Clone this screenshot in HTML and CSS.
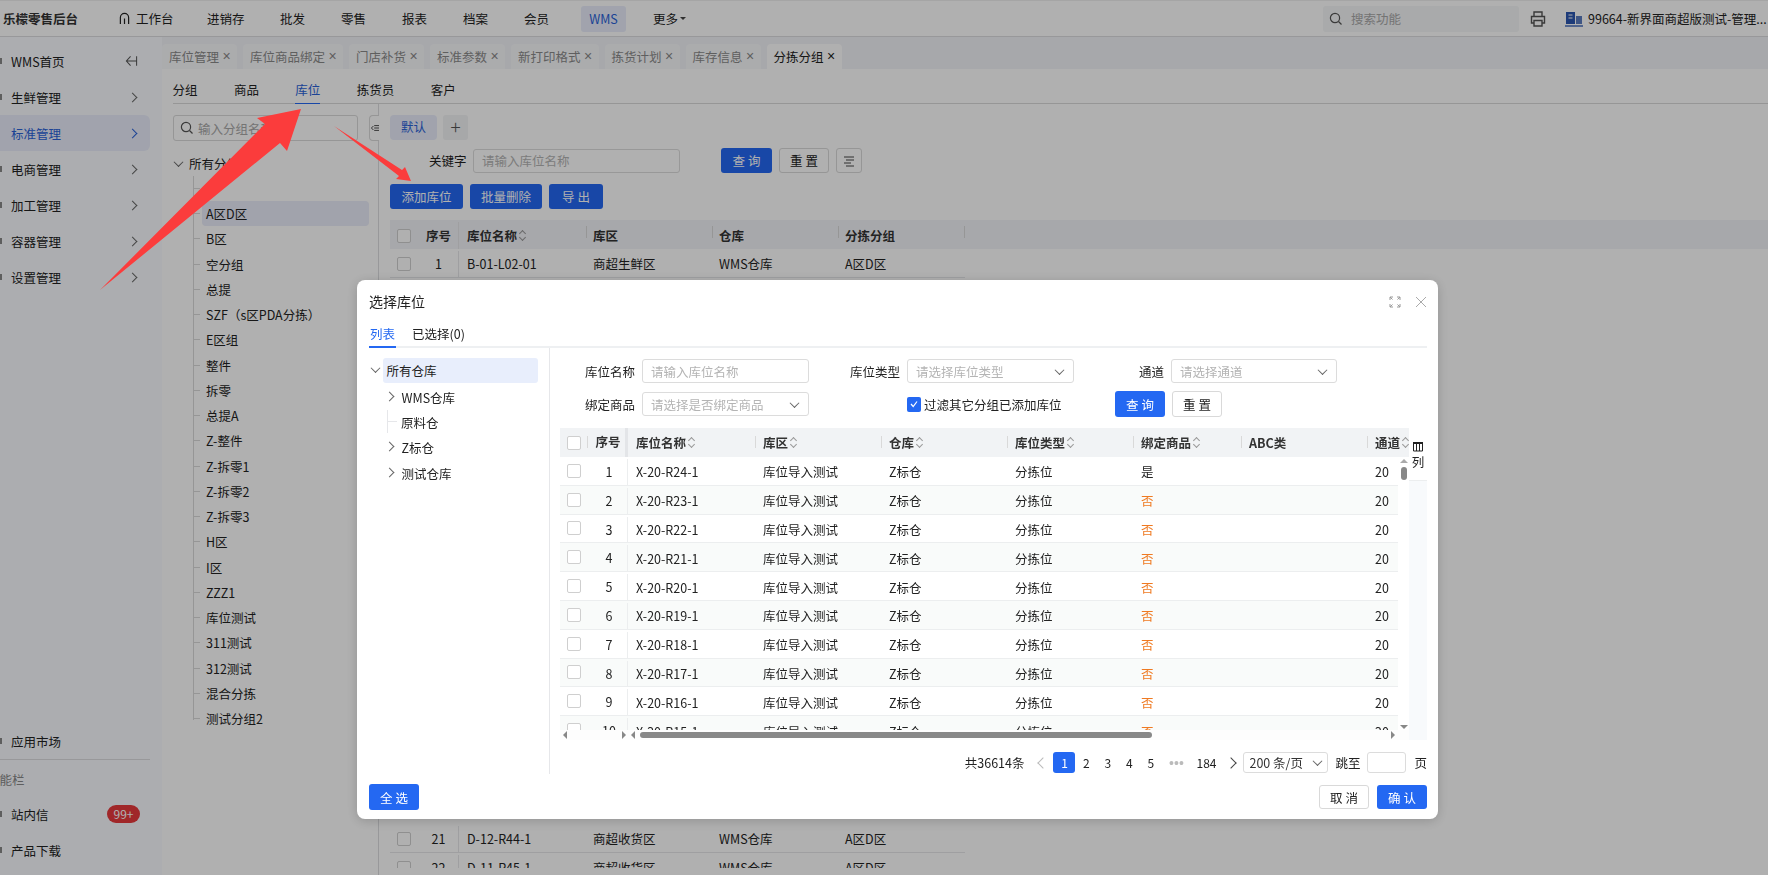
FILE: index.html
```html
<!DOCTYPE html>
<html lang="zh-CN">
<head>
<meta charset="utf-8">
<title>选择库位</title>
<link rel="stylesheet" href="styles.css">
</head>
<body>
<div class="page">
  <header class="topbar">
    <div class="brand">乐檬零售后台</div>
    <nav class="topnav">
      <a class="tn tn-home"><svg class="home" viewBox="0 0 12 14"><path d="M1.500 13V6a4.500 4.500 0 0 1 9 0v7M6 7v6" fill="none" stroke="#222" stroke-width="1.300"/></svg>工作台</a>
      <a class="tn tn-a">进销存</a>
      <a class="tn tn-b">批发</a>
      <a class="tn tn-b">零售</a>
      <a class="tn tn-b">报表</a>
      <a class="tn tn-b">档案</a>
      <a class="tn tn-b">会员</a>
      <a class="tn tn-wms">WMS</a>
      <a class="tn tn-more">更多<i class="caret"></i></a>
    </nav>
    <div class="topright">
      <div class="topsearch">
        <svg class="ic14" viewBox="0 0 14 14"><circle cx="6" cy="6" r="4.600" fill="none" stroke="#555" stroke-width="1.200"/><path d="M9.500 9.500l3 3" stroke="#555" stroke-width="1.200"/></svg>
        <span>搜索功能</span>
      </div>
      <svg class="printer" viewBox="0 0 18 18"><path d="M5 6V2h8v4M5 13H2.500V6.500h13V13H13M5 10.500h8V16H5z" fill="none" stroke="#555" stroke-width="1.400"/></svg>
      <svg class="store" viewBox="0 0 18 16"><path d="M1 1h9v12H1z" fill="#2a56b0"/><path d="M11 5h6v8h-6z" fill="#5b7cc0"/><path d="M0 15h18" stroke="#2a56b0" stroke-width="1.300"/><path d="M3.500 4h4M3.500 7h4" stroke="#fff"/></svg>
      <span class="account">99664-新界面商超版测试-管理...</span>
    </div>
  </header>

  <div class="body">
    <aside class="sidebar">
      <div class="side-top">
        <div class="si"><span>WMS首页</span><svg class="collapse" viewBox="0 0 14 12"><path d="M6 1L1.500 6 6 11M1.500 6H12.500M12.500 1v10" fill="none" stroke="#555" stroke-width="1.100"/></svg></div>
        <div class="si"><span>生鲜管理</span><i class="chev"></i></div>
        <div class="si si-on"><span>标准管理</span><i class="chev"></i></div>
        <div class="si"><span>电商管理</span><i class="chev"></i></div>
        <div class="si"><span>加工管理</span><i class="chev"></i></div>
        <div class="si"><span>容器管理</span><i class="chev"></i></div>
        <div class="si"><span>设置管理</span><i class="chev"></i></div>
      </div>
      <div class="side-bottom">
        <div class="si"><span>应用市场</span></div>
        <div class="side-head">功能栏</div>
        <div class="si"><span>站内信</span><b class="badge">99+</b></div>
        <div class="si"><span>产品下载</span></div>
      </div>
    </aside>

    <main class="content">
      <div class="tabstrip">
        <div class="tab">库位管理<i>×</i></div>
        <div class="tab">库位商品绑定<i>×</i></div>
        <div class="tab">门店补货<i>×</i></div>
        <div class="tab">标准参数<i>×</i></div>
        <div class="tab">新打印格式<i>×</i></div>
        <div class="tab">拣货计划<i>×</i></div>
        <div class="tab">库存信息<i>×</i></div>
        <div class="tab tab-on">分拣分组<i>×</i></div>
      </div>
      <div class="panel">
        <div class="subtabs">
          <a>分组</a><a>商品</a><a class="on">库位</a><a>拣货员</a><a>客户</a>
        </div>
        <div class="split">
          <section class="groups">
            <div class="gsearch">
              <svg class="ic14" viewBox="0 0 14 14"><circle cx="6" cy="6" r="4.600" fill="none" stroke="#555" stroke-width="1.200"/><path d="M9.500 9.500l3 3" stroke="#555" stroke-width="1.200"/></svg>
              <span>输入分组名称</span>
            </div>
            <div class="groot"><i class="chev-d"></i>所有分组</div>
            <ul class="gtree">
              <li class="blank"></li>
              <li class="on">A区D区</li><li>B区</li><li>空分组</li><li>总提</li><li>SZF（s区PDA分拣）</li><li>E区组</li><li>整件</li><li>拆零</li><li>总提A</li><li>Z-整件</li><li>Z-拆零1</li><li>Z-拆零2</li><li>Z-拆零3</li><li>H区</li><li>I区</li><li>ZZZ1</li><li>库位测试</li><li>311测试</li><li>312测试</li><li>混合分拣</li><li>测试分组2</li>
            </ul>
            <div class="toggle"><svg viewBox="0 0 10 10"><path d="M4 2h6M4 5h6M4 8h6M3 2.500L0.500 5 3 7.500" fill="none" stroke="#222" stroke-width="1"/></svg></div>
          </section>
          <section class="list">
            <div class="vtabs"><span class="vtab">默认</span><span class="vadd">+</span></div>
            <div class="filter">
              <label>关键字</label>
              <div class="inp kw">请输入库位名称</div>
              <button class="btn pri q">查 询</button>
              <button class="btn def r">重 置</button>
              <button class="btn def cfg"><svg viewBox="0 0 12 12"><path d="M1 2h10M3 5h8M1 8h7M3 11h8" stroke="#444" stroke-width="1"/></svg></button>
            </div>
            <div class="actions">
              <button class="btn pri a1">添加库位</button>
              <button class="btn pri a2">批量删除</button>
              <button class="btn pri a3">导 出</button>
            </div>
            <div class="bt">
              <div class="bt-h">
                <span class="bc"><i class="cb"></i></span><span class="bn">序号</span>
                <span class="bd">库位名称<i class="sort"></i></span><span class="bd">库区</span><span class="bd">仓库</span><span class="bd bd-l">分拣分组</span>
              </div>
              <div class="bt-r"><span class="bc"><i class="cb"></i></span><span class="bn">1</span><span>B-01-L02-01</span><span>商超生鲜区</span><span>WMS仓库</span><span>A区D区</span></div>
              <div class="bt-gap"></div>
              <div class="bt-r"><span class="bc"><i class="cb"></i></span><span class="bn">21</span><span>D-12-R44-1</span><span>商超收货区</span><span>WMS仓库</span><span>A区D区</span></div>
              <div class="bt-r"><span class="bc"><i class="cb"></i></span><span class="bn">22</span><span>D-11-R45-1</span><span>商超收货区</span><span>WMS仓库</span><span>A区D区</span></div>
            </div>
          </section>
        </div>
      </div>
    </main>
  </div>
</div>

<div class="mask"></div>

<svg class="arrows" viewBox="0 0 1768 875">
  <polygon points="100,290 265,124 257,118 301,109 287,151 280,143" fill="#fb3c3c"/>
  <polygon points="334,126 402,170 405,167 411,181 396,179 399,176" fill="#fb3c3c"/>
</svg>

<div class="modal">
  <div class="m-title">
    <h2>选择库位</h2>
    <svg class="m-expand" viewBox="0 0 12 12"><path d="M1 4V1h3M8 1h3v3M1 8v3h3M11 8v3H8M1 1l2.500 2.500M11 1L8.500 3.500M1 11l2.500-2.500M11 11L8.500 8.500" fill="none" stroke="#999" stroke-width="1"/></svg>
    <svg class="m-close" viewBox="0 0 12 12"><path d="M1 1l10 10M11 1L1 11" stroke="#aaa" stroke-width="1"/></svg>
  </div>
  <div class="m-tabs"><a class="on">列表</a><a>已选择(0)</a></div>
  <div class="m-main">
    <div class="m-tree">
      <div class="mt mt-root"><i class="chev-d"></i><span>所有仓库</span></div>
      <div class="mt"><i class="chev-r"></i><span>WMS仓库</span></div>
      <div class="mt mt-leaf"><span>原料仓</span></div>
      <div class="mt"><i class="chev-r"></i><span>Z标仓</span></div>
      <div class="mt"><i class="chev-r"></i><span>测试仓库</span></div>
    </div>
    <div class="m-right">
      <div class="m-form">
        <label>库位名称</label><div class="inp mi">请输入库位名称</div>
        <label>库位类型</label><div class="inp mi sel">请选择库位类型<i class="chev-d"></i></div>
        <label>通道</label><div class="inp mi sel">请选择通道<i class="chev-d"></i></div>
        <label>绑定商品</label><div class="inp mi sel">请选择是否绑定商品<i class="chev-d"></i></div>
        <div class="checkline"><i class="ck"><svg viewBox="0 0 10 10"><path d="M2 5l2.200 2.500L8 2.500" fill="none" stroke="#fff" stroke-width="1.200"/></svg></i>过滤其它分组已添加库位</div>
        <div class="f-btns"><button class="btn pri mq">查 询</button><button class="btn def mr">重 置</button></div>
      </div>
      <div class="mt-wrap">
        <div class="gridbox">
          <div class="g-h">
            <span class="c0"><i class="cb"></i></span><span class="c1 sep">序号</span>
            <span class="hd frz">库位名称<i class="sort"></i></span><span class="hd sep">库区<i class="sort"></i></span><span class="hd sep">仓库<i class="sort"></i></span><span class="hd sep">库位类型<i class="sort"></i></span><span class="hd sep">绑定商品<i class="sort"></i></span><span class="hd sep">ABC类</span><span class="hd sep">通道<i class="sort"></i></span>
          </div>
          <div class="g-body">
            <div class="g-r"><span class="c0"><i class="cb"></i></span><span class="c1">1</span><span class="frz">X-20-R24-1</span><span>库位导入测试</span><span>Z标仓</span><span>分拣位</span><span>是</span><span></span><span>20</span></div>
            <div class="g-r"><span class="c0"><i class="cb"></i></span><span class="c1">2</span><span class="frz">X-20-R23-1</span><span>库位导入测试</span><span>Z标仓</span><span>分拣位</span><span class="no">否</span><span></span><span>20</span></div>
            <div class="g-r"><span class="c0"><i class="cb"></i></span><span class="c1">3</span><span class="frz">X-20-R22-1</span><span>库位导入测试</span><span>Z标仓</span><span>分拣位</span><span class="no">否</span><span></span><span>20</span></div>
            <div class="g-r"><span class="c0"><i class="cb"></i></span><span class="c1">4</span><span class="frz">X-20-R21-1</span><span>库位导入测试</span><span>Z标仓</span><span>分拣位</span><span class="no">否</span><span></span><span>20</span></div>
            <div class="g-r"><span class="c0"><i class="cb"></i></span><span class="c1">5</span><span class="frz">X-20-R20-1</span><span>库位导入测试</span><span>Z标仓</span><span>分拣位</span><span class="no">否</span><span></span><span>20</span></div>
            <div class="g-r"><span class="c0"><i class="cb"></i></span><span class="c1">6</span><span class="frz">X-20-R19-1</span><span>库位导入测试</span><span>Z标仓</span><span>分拣位</span><span class="no">否</span><span></span><span>20</span></div>
            <div class="g-r"><span class="c0"><i class="cb"></i></span><span class="c1">7</span><span class="frz">X-20-R18-1</span><span>库位导入测试</span><span>Z标仓</span><span>分拣位</span><span class="no">否</span><span></span><span>20</span></div>
            <div class="g-r"><span class="c0"><i class="cb"></i></span><span class="c1">8</span><span class="frz">X-20-R17-1</span><span>库位导入测试</span><span>Z标仓</span><span>分拣位</span><span class="no">否</span><span></span><span>20</span></div>
            <div class="g-r"><span class="c0"><i class="cb"></i></span><span class="c1">9</span><span class="frz">X-20-R16-1</span><span>库位导入测试</span><span>Z标仓</span><span>分拣位</span><span class="no">否</span><span></span><span>20</span></div>
            <div class="g-r"><span class="c0"><i class="cb"></i></span><span class="c1">10</span><span class="frz">X-20-R15-1</span><span>库位导入测试</span><span>Z标仓</span><span>分拣位</span><span class="no">否</span><span></span><span>20</span></div>
            <div class="vscroll"><i class="up"></i><b></b><i class="down"></i></div>
          </div>
          <div class="hscroll">
            <div class="hs-frozen"><i class="al"></i><i class="ar"></i></div>
            <div class="hs-main"><i class="al"></i><b></b><i class="ar"></i></div>
          </div>
        </div>
        <div class="colbtn">
          <div class="colhead"><svg viewBox="0 0 10 10"><path d="M0.500 1h9v8h-9zM3.500 1v8M6.500 1v8" fill="none" stroke="#222" stroke-width="1"/><path d="M0 1h10" stroke="#222" stroke-width="2"/></svg><span>列</span></div>
        </div>
      </div>
      <div class="pager">
        <span class="total">共36614条</span>
        <span class="arrow dim"><i class="pl"></i></span>
        <span class="pg cur">1</span><span class="pg">2</span><span class="pg">3</span><span class="pg">4</span><span class="pg">5</span>
        <span class="dots">•••</span>
        <span class="pg last">184</span>
        <span class="arrow"><i class="pr"></i></span>
        <div class="inp psize">200 条/页<i class="chev-d"></i></div>
        <span class="jump">跳至</span>
        <div class="inp pjump"></div>
        <span class="jump jump-end">页</span>
      </div>
    </div>
  </div>
  <div class="m-foot">
    <button class="btn all">全 选</button>
    <div class="m-foot-r">
      <button class="btn def mbtn">取 消</button>
      <button class="btn pri mbtn">确 认</button>
    </div>
  </div>
</div>
</body>
</html>
```

FILE: styles.css
```css
* { box-sizing: border-box; }
html, body { margin: 0; padding: 0; height: 100%; overflow: hidden; }
body {
  font-family: "Noto Sans CJK SC", "Noto Sans", sans-serif;
  font-size: 12.5px;
  color: #222;
  background: #fff;
}
i { font-style: normal; }
button { font-family: inherit; cursor: pointer; padding: 0; }
ul { list-style: none; margin: 0; padding: 0; }

.page { height: 875px; display: flex; flex-direction: column; }

/* top bar */
.topbar { height: 37px; flex: none; display: flex; align-items: center; border-bottom: 1px solid #dcdde0; border-top: 1px solid #efefef; background: #fff; }
.brand { width: 119px; padding-left: 3px; font-weight: 700; color: #333; }
.topnav { display: flex; align-items: center; }
.tn { display: flex; align-items: center; height: 26px; }
.tn-home { width: 88px; }
.home { width: 11px; height: 13px; margin-right: 6px; }
.tn-a { width: 73px; }
.tn-b { width: 61px; }
.tn-wms { width: 45px; justify-content: center; background: #e9edfb; color: #2a62d8; border-radius: 3px; margin: 0 27px 0 -4px; }
.caret { display: inline-block; border: 3px solid transparent; border-top-color: #444; border-bottom: 0; margin-left: 2px; }
.topright { margin-left: auto; display: flex; align-items: center; }
.topsearch { width: 196px; height: 26px; display: flex; align-items: center; gap: 8px; padding-left: 6px; background: #f5f6f8; border-radius: 3px; color: #a8a8a8; }
.ic14 { width: 14px; height: 14px; flex: none; }
.printer { width: 18px; height: 18px; margin-left: 10px; }
.store { width: 18px; height: 16px; margin-left: 18px; }
.account { width: 180px; margin-left: 5px; white-space: nowrap; overflow: hidden; }

.body { flex: 1; display: flex; min-height: 0; }

/* sidebar */
.sidebar { width: 162px; flex: none; background: #f9fbff; display: flex; flex-direction: column; justify-content: space-between; padding: 6px 0 7px; overflow: hidden; }
.si { height: 36px; width: 150px; padding: 0 12px 0 11px; display: flex; align-items: center; justify-content: space-between; position: relative; }
.si::before { content: ""; position: absolute; left: 0; top: 15px; width: 1.5px; height: 6px; background: #888; }
.si-on::before { display: none; }
.si-on { background: #e9edfb; color: #2a62d8; border-radius: 0 6px 6px 0; }
.chev { width: 7px; height: 7px; border-top: 1.2px solid #666; border-right: 1.2px solid #666; transform: rotate(45deg); margin-right: 2px; }
.si-on .chev { border-color: #2a62d8; }
.collapse { width: 13px; height: 12px; }
.side-head { width: 150px; border-top: 1px solid #dcdde0; height: 37px; line-height: 40px; color: #888; text-indent: -13px; }
.badge { width: 33px; height: 18px; line-height: 18px; border-radius: 9px; background: #e8393c; color: #fff; font-weight: 400; font-size: 12px; text-align: center; margin-right: -2px; }

/* content */
.content { flex: 1; min-width: 0; display: flex; flex-direction: column; }
.tabstrip { height: 32px; flex: none; background: #f2f3f8; display: flex; align-items: flex-end; gap: 6px; }
.tab { height: 25px; padding: 0 6px 1px 7px; background: #f8f9fb; border-radius: 4px 4px 0 0; color: #8a8a8a; display: flex; align-items: center; gap: 3px; white-space: nowrap; }
.tab i { width: 9px; font-family: "Liberation Sans", sans-serif; font-size: 14px; line-height: 1; color: #888; text-align: center; }
.tab-on { background: #fff; color: #222; }
.tab-on i { color: #222; }
.panel { flex: 1; min-height: 0; display: flex; flex-direction: column; padding: 0 0 0 11px; }
.subtabs { height: 35px; flex: none; display: flex; border-bottom: 1px solid #d9d9d9; }
.subtabs a { height: 35px; line-height: 42px; margin-right: 36.4px; }
.subtabs a:first-child { margin-left: -0.5px; }
.subtabs a.on { color: #2a62d8; border-bottom: 1px solid #2468f2; }
.split { flex: 1; min-height: 0; display: flex; }

.groups { width: 206px; flex: none; position: relative; border-right: 1px solid #dcdde0; padding-top: 11px; }
.gsearch { width: 185px; height: 26px; border: 1px solid #d9d9d9; border-radius: 3px; display: flex; align-items: center; gap: 4px; padding-left: 6px; color: #a8a8a8; white-space: nowrap; overflow: hidden; }
.groot { margin-top: 10px; height: 25px; display: flex; align-items: center; gap: 7px; padding-left: 2px; }
.chev-d { display: inline-block; width: 7px; height: 7px; border-right: 1.1px solid #666; border-bottom: 1.1px solid #666; transform: rotate(45deg) translate(-1px, -1px); flex: none; }
.chev-r { display: inline-block; width: 7px; height: 7px; border-right: 1.1px solid #666; border-top: 1.1px solid #666; transform: rotate(45deg); flex: none; }
.gtree { margin-left: 20px; border-left: 1px solid #d9d9d9; height: 544px; }
.gtree li { height: 25.25px; line-height: 25px; padding-left: 4px; position: relative; margin-left: 8px; margin-right: 9px; border-radius: 4px; white-space: nowrap; }
.gtree li::before { content: ""; position: absolute; left: -8px; top: 12px; width: 6px; border-top: 1px solid #d9d9d9; }
.gtree li.blank { height: 25px; }
.gtree li.on { background: #e9ecf9; }
.toggle { position: absolute; right: -1px; top: 11px; width: 10px; height: 26px; border: 1px solid #d9d9d9; border-right: 0; border-radius: 4px 0 0 4px; background: #fff; display: flex; align-items: center; }
.toggle svg { width: 8px; height: 8px; margin-left: 1px; }

.list { flex: 1; min-width: 0; padding: 11px 0 0 11px; }
.vtabs { display: flex; gap: 6px; height: 25px; }
.vtab { width: 47px; line-height: 24px; text-align: center; background: #e9edfb; color: #2a62d8; border-radius: 4px; }
.vadd { width: 25px; line-height: 22px; text-align: center; background: #f2f3f5; border-radius: 3px; font-size: 19px; color: #555; font-weight: 300; }
.filter { height: 25px; margin-top: 8px; display: flex; align-items: center; }
.filter label { width: 39px; margin-left: 39px; }
.inp { height: 24px; border: 1px solid #dcdcdc; border-radius: 3px; color: #b4b4b4; background: #fff; display: flex; align-items: center; justify-content: space-between; padding: 0 8px; white-space: nowrap; }
.kw { width: 207px; margin-left: 5px; }
.btn { height: 25px; border-radius: 3px; font-size: 12.5px; border: 1px solid transparent; }
.pri { background: #2468f2; color: #fff; }
.def { background: #fff; border-color: #d9d9d9; color: #222; }
.q { width: 51px; margin-left: 41px; }
.r { width: 50px; margin-left: 7px; }
.cfg { width: 26px; margin-left: 7px; display: flex; align-items: center; justify-content: center; }
.cfg svg { width: 12px; height: 12px; }
.actions { display: flex; gap: 7px; margin-top: 11px; }
.a1 { width: 73px; } .a2 { width: 72px; } .a3 { width: 54px; }

.bt { margin-top: 11px; height: 648px; overflow: hidden; }
.bt-h, .bt-r { display: grid; grid-template-columns: 28px 41px 127px 126px 126px 127px; align-items: center; padding-top: 2px; }
.bt-h { height: 29px; background: #f2f3f8; font-weight: 700; color: #333; }
.bt-r { height: 28.75px; width: 575px; border-bottom: 1px solid #e6e7ea; }
.bt-gap { height: 546.25px; }
.bt-r span:nth-child(n+3), .bt-h span:nth-child(n+3) { padding-left: 7px; }
.bt-r span:nth-child(3), .bt-h span:nth-child(3) { padding-left: 8px; }
.bc { display: flex; justify-content: center; align-items: center; height: 100%; }
.bn { text-align: center; border-right: 1px solid #e6e7ea; height: 100%; display: flex; align-items: center; justify-content: center; padding-left: 1px; }
.bd { position: relative; display: flex; align-items: center; }
.bd + .bd::before { content: ""; position: absolute; left: 0; top: 0; height: 12px; border-left: 1px solid #d9d9d9; }
.bd-l::after { content: ""; position: absolute; right: 0; top: 0; height: 12px; border-left: 1px solid #d9d9d9; }
.cb { display: block; width: 14px; height: 14px; border: 1px solid #cfcfcf; border-radius: 2px; background: #fff; }
.sort { display: inline-block; width: 6px; height: 11px; margin-left: 2px; position: relative; }
.sort::before, .sort::after { content: ""; position: absolute; left: 1px; width: 4px; height: 4px; border-left: 1px solid #999; border-top: 1px solid #999; }
.sort::before { top: 1px; transform: rotate(45deg); }
.sort::after { bottom: 1px; transform: rotate(225deg); }

/* mask + arrows */
.mask { position: fixed; inset: 0; background: rgba(0, 0, 0, .31); }
.arrows { position: fixed; left: 0; top: 0; width: 1768px; height: 875px; pointer-events: none; }

/* modal */
.modal { position: fixed; left: 357px; top: 280px; width: 1081px; height: 539px; background: #fff; border-radius: 8px; box-shadow: 0 2px 12px rgba(0,0,0,.18); padding: 0 11px 0 12px; display: flex; flex-direction: column; }
.m-title { height: 44px; flex: none; display: flex; align-items: center; }
.m-title h2 { margin: 0 0 2px; font-size: 14px; font-weight: 400; color: #222; flex: 1; }
.m-expand { width: 12px; height: 12px; margin-right: 14px; }
.m-close { width: 12px; height: 12px; }
.m-tabs { height: 24px; flex: none; display: flex; gap: 15px; border-bottom: 2px solid #eef0f2; line-height: 20px; }
.m-tabs a { height: 24px; padding: 0 1px; }
.m-tabs a.on { color: #2468f2; border-bottom: 2px solid #2468f2; }
.m-main { flex: none; display: flex; height: 426px; }
.m-tree { width: 181px; flex: none; border-right: 1px solid #e6e7ea; padding: 10px 0 0 14px; }
.mt { height: 25.4px; display: flex; align-items: center; gap: 7px; padding-left: 3.5px; }
.mt span { padding-top: 2px; }
.mt .chev-r { margin-left: -1px; margin-right: 2px; }
.mt-root { width: 155px; background: #e8eefc; border-radius: 3px; position: relative; }
.mt-root span { padding-top: 0; }
.mt-root .chev-d { position: absolute; left: -11px; top: 8px; }
.mt-leaf { padding-left: 18px; position: relative; }
.mt-leaf::before { content: ""; position: absolute; left: 4px; top: 1px; bottom: 1px; border-left: 1px solid #e6e7ea; }
.mt-leaf::after { content: ""; position: absolute; left: 5px; top: 12px; width: 9px; border-top: 1px solid #e6e7ea; }
.m-right { flex: 1; min-width: 0; padding: 11px 0 0 10px; display: flex; flex-direction: column; }
.m-form { display: grid; grid-template-columns: 82px 167px 98px 167px 97px 166px; grid-template-rows: 24px 26px; row-gap: 8px; align-items: center; height: 69px; flex: none; }
.m-form label { text-align: right; padding-right: 7px; }
.mi { height: 24px; }
.mi.sel .chev-d { margin-right: 2px; }
.checkline { grid-column: 4; display: flex; align-items: center; gap: 3px; white-space: nowrap; }
.ck { width: 14px; height: 15px; background: #2468f2; border-radius: 2px; display: flex; align-items: center; justify-content: center; flex: none; }
.ck svg { width: 10px; height: 10px; }
.f-btns { grid-column: 5 / span 2; display: flex; gap: 7px; padding-left: 41px; }
.mq, .mr { width: 50px; height: 26px; }
.mt-wrap { height: 312px; flex: none; display: flex; }
.gridbox { width: 849px; flex: none; overflow: hidden; display: flex; flex-direction: column; position: relative; }
.g-h, .g-r { display: grid; grid-template-columns: 27px 41px 127px 126px 126px 126px 108px 126px 42px; align-items: center; }
.g-h { height: 29px; flex: none; background: #f1f3f5; font-weight: 700; color: #333; }
.g-body { height: 273px; position: relative; overflow: hidden; }
.g-r { height: 28.8px; width: 838px; border-bottom: 1px solid #eceeef; overflow: hidden; padding-top: 2px; }
.g-r:nth-child(even) { background: #f9fbfa; }
.g-r span, .g-h span { padding-left: 8px; white-space: nowrap; }
.g-r .c0, .g-h .c0 { padding-left: 7px; display: block; }
.g-r .c0 { margin-top: -2px; }
.g-r .c1, .g-h .c1 { padding-left: 4px; text-align: center; }
.g-r .c1 { height: 100%; line-height: 25px; border-right: 1px solid #eceeef; }
.g-h .c1 { height: 100%; line-height: 28px; border-right: 3px solid #e3e5e8; position: relative; }
.g-h .c1.sep::before { content: ""; position: absolute; left: 0; top: 8px; height: 12px; border-left: 1px solid #d9d9d9; }
.g-h .hd { position: relative; display: flex; align-items: center; height: 100%; }
.g-h .hd.sep::before { content: ""; position: absolute; left: 0; top: 8px; height: 12px; border-left: 1px solid #d9d9d9; }
.no { color: #ef7a22; }
.vscroll { position: absolute; right: 0; top: 0; bottom: 0; width: 11px; background: #fff; display: flex; flex-direction: column; align-items: center; padding-top: 2px; }
.vscroll b { width: 6px; height: 13px; background: #888; border-radius: 3px; margin-top: 4px; }
.vscroll .up { border: 4px solid transparent; border-bottom-color: #aaa; border-top: 0; }
.vscroll .down { border: 4px solid transparent; border-top-color: #888; border-bottom: 0; margin-top: auto; margin-bottom: 1px; }
.hscroll { height: 10px; flex: none; display: flex; align-items: center; background: #fdfdfd; }
.hs-frozen { width: 68px; flex: none; display: flex; justify-content: space-between; padding: 0 2px 0 3px; }
.hs-main { flex: 1; display: flex; align-items: center; padding-left: 3px; padding-right: 14px; }
.hs-main b { width: 512px; height: 6px; background: #888; border-radius: 3px; margin-left: 5px; }
.hs-main .ar { margin-left: auto; }
.al { border: 4px solid transparent; border-right-color: #888; border-left: 0; display: block; }
.ar { border: 4px solid transparent; border-left-color: #888; border-right: 0; display: block; }
.colbtn { width: 18px; flex: none; background: #f8fafc; }
.colhead { height: 53px; background: #fff; border-bottom: 1px solid #eceeef; padding-top: 14px; text-align: center; line-height: 16px; }
.colhead svg { display: block; width: 10px; height: 10px; margin: 0 auto 2px; }

/* pager */
.pager { margin-top: 12px; display: flex; align-items: center; height: 21px; justify-content: flex-end; white-space: nowrap; }
.total { margin-right: 10px; }
.arrow { width: 15px; height: 21px; display: flex; align-items: center; justify-content: center; }
.arrow.dim { margin-right: 4px; }
.pl, .pr { display: block; width: 8px; height: 8px; transform: rotate(45deg); }
.pl { border-left: 1.1px solid #bbb; border-bottom: 1.1px solid #bbb; margin-left: 3px; }
.pr { border-right: 1.1px solid #444; border-top: 1.1px solid #444; margin-right: 3px; }
.pg { width: 21.5px; height: 21px; line-height: 21px; text-align: center; font-size: 12px; }
.pg.cur { width: 22px; background: #2468f2; color: #fff; border-radius: 3px; }
.dots { width: 30px; text-align: center; color: #bbb; font-family: "Liberation Sans", sans-serif; font-size: 14px; }
.pg.last { width: 30px; margin-right: 4px; }
.psize { width: 85px; height: 21px; margin-left: 3px; color: #333; padding: 0 6px 0 5px; }
.jump { margin-left: 7px; }
.jump-end { margin-left: 8px; }
.pjump { width: 39px; height: 21px; margin-left: 7px; }

/* footer */
.m-foot { height: 45px; flex: none; display: flex; justify-content: space-between; align-items: flex-start; padding-top: 10px; }
.all { width: 50px; height: 26px; background: #2468f2; color: #fff; }
.m-foot-r { display: flex; gap: 8px; margin-top: 1px; }
.mbtn { width: 50px; height: 24px; }
```
